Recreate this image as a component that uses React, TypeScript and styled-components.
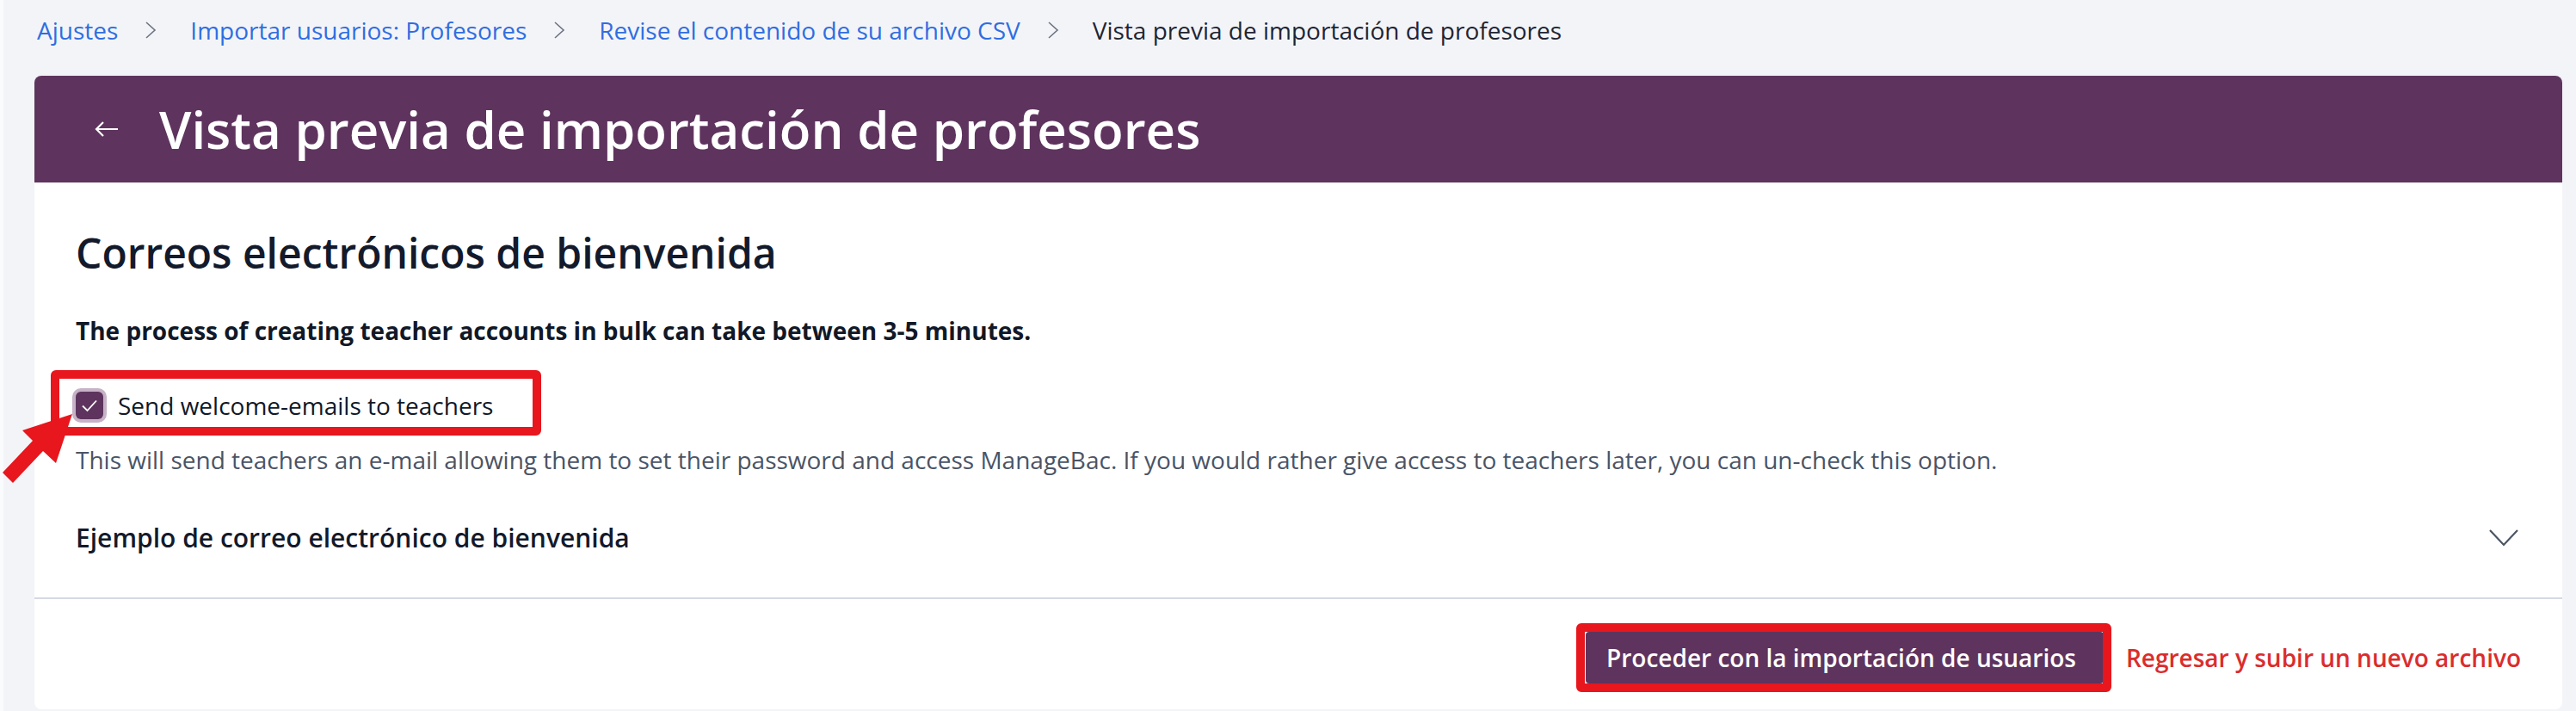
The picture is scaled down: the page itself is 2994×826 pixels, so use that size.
import React from "react";
import styled, { createGlobalStyle } from "styled-components";

const GlobalStyle = createGlobalStyle`
  html, body {
    margin: 0;
    padding: 0;
    background: #f3f4f8;
    font-family: "Open Sans", "Noto Sans", sans-serif;
  }
  * { box-sizing: border-box; }
`;

const Page = styled.div`
  min-height: 826px;
  padding: 0 16px 0 36px;
  border-left: 4px solid #fafbfc;
`;

const Breadcrumbs = styled.nav`
  display: flex;
  align-items: center;
  height: 88px;
  padding: 0 0 18px 3px;
  font-size: 28px;
  line-height: 38px;
`;

const Crumb = styled.a<{ $current?: boolean }>`
  color: ${(p) => (p.$current ? "#1f2533" : "#2f6ee0")};
  text-decoration: none;
`;

const Sep = styled.svg`
  width: 14px;
  height: 22px;
  margin: 0 39px 0 31px;
  flex: none;
`;

const Card = styled.section`
  background: #ffffff;
  border-radius: 8px;
`;

const CardHeader = styled.header`
  display: flex;
  align-items: center;
  height: 124px;
  padding-left: 70px;
  background: #5e345e;
  border-radius: 8px 8px 0 0;
`;

const BackArrow = styled.svg`
  width: 28px;
  height: 18px;
  margin-right: 47px;
  flex: none;
`;

const Title = styled.h1`
  margin: 0;
  color: #ffffff;
  font-size: 60px;
  line-height: 76px;
  font-weight: 600;
`;

const Body = styled.div`
  padding: 54px 48px 49px 48px;
`;

const Heading = styled.h2`
  margin: 0;
  font-size: 48px;
  line-height: 56px;
  font-weight: 600;
  color: #131a2b;
`;

const Notice = styled.p`
  margin: 42px 0 0;
  font-size: 28px;
  line-height: 40px;
  font-weight: 700;
  color: #111827;
`;

const CheckRow = styled.label`
  position: relative;
  display: inline-flex;
  align-items: center;
  height: 40px;
  margin-top: 47px;
  gap: 17px;
  font-size: 28px;
  line-height: 40px;
  color: #111827;
`;

const Box = styled.span`
  display: flex;
  align-items: center;
  justify-content: center;
  width: 32px;
  height: 32px;
  border-radius: 6px;
  background: #5e345e;
  box-shadow: 0 0 0 4px #c7b3c7;
`;

const Highlight = styled.span<{ $t: number; $r: number; $b: number; $l: number }>`
  position: absolute;
  top: ${(p) => -p.$t}px;
  right: ${(p) => -p.$r}px;
  bottom: ${(p) => -p.$b}px;
  left: ${(p) => -p.$l}px;
  border: 10px solid #e8161d;
  border-radius: 6px;
  pointer-events: none;
`;

const Pointer = styled.svg`
  position: absolute;
  left: -88px;
  top: 24px;
  width: 90px;
  height: 90px;
  pointer-events: none;
`;

const Hint = styled.p`
  margin: 24px 0 0;
  font-size: 28px;
  line-height: 38px;
  color: #4a5466;
`;

const Accordion = styled.div`
  display: flex;
  align-items: center;
  justify-content: space-between;
  margin-top: 52px;
`;

const AccordionTitle = styled.span`
  font-size: 30px;
  line-height: 40px;
  font-weight: 600;
  color: #131a2b;
`;

const Chevron = styled.svg`
  width: 40px;
  height: 24px;
`;

const Footer = styled.footer`
  display: flex;
  justify-content: flex-end;
  align-items: center;
  gap: 26px;
  padding: 38px 48px 30px;
  border-top: 2px solid #d5d9e0;
`;

const ButtonWrap = styled.span`
  position: relative;
  display: inline-flex;
`;

const Primary = styled.button`
  height: 60px;
  padding: 0 32px 0 24px;
  border: none;
  border-radius: 4px;
  background: #5e345e;
  color: #ffffff;
  font-family: inherit;
  font-size: 28px;
  font-weight: 600;
`;

const DangerLink = styled.a`
  color: #da2d2d;
  font-size: 28px;
  font-weight: 600;
  text-decoration: none;
`;

const crumbs = [
  "Ajustes",
  "Importar usuarios: Profesores",
  "Revise el contenido de su archivo CSV",
];

export default function App() {
  return (
    <>
      <GlobalStyle />
      <Page>
        <Breadcrumbs>
          {crumbs.map((c) => (
            <React.Fragment key={c}>
              <Crumb href="#">{c}</Crumb>
              <Sep viewBox="0 0 14 22">
                <path d="M2 2l10 9-10 9" fill="none" stroke="#6b7280" strokeWidth="1.6" />
              </Sep>
            </React.Fragment>
          ))}
          <Crumb $current>Vista previa de importación de profesores</Crumb>
        </Breadcrumbs>

        <Card>
          <CardHeader>
            <BackArrow viewBox="0 0 28 18">
              <path d="M27 9H2M10 1L2 9l8 8" fill="none" stroke="#ffffff" strokeWidth="2.2" />
            </BackArrow>
            <Title>Vista previa de importación de profesores</Title>
          </CardHeader>

          <Body>
            <Heading>Correos electrónicos de bienvenida</Heading>
            <Notice>
              The process of creating teacher accounts in bulk can take between 3-5 minutes.
            </Notice>
            <CheckRow>
              <Box>
                <svg width="20" height="16" viewBox="0 0 20 16">
                  <path d="M2 8.5l5.5 5.5L18 2.5" fill="none" stroke="#ffffff" strokeWidth="1.8" />
                </svg>
              </Box>
              Send welcome-emails to teachers
              <Highlight $t={21} $r={56} $b={15} $l={29} />
              <Pointer viewBox="0 0 90 90">
                <polygon points="84,6 26,25 38,37 3,74 15,86 50,49 65,63" fill="#e8161d" />
              </Pointer>
            </CheckRow>
            <Hint>
              This will send teachers an e-mail allowing them to set their password and access
              ManageBac. If you would rather give access to teachers later, you can un-check this
              option.
            </Hint>
            <Accordion>
              <AccordionTitle>Ejemplo de correo electrónico de bienvenida</AccordionTitle>
              <Chevron viewBox="0 0 40 24">
                <path d="M4 3l16 17L36 3" fill="none" stroke="#4b5563" strokeWidth="2.2" />
              </Chevron>
            </Accordion>
          </Body>

          <Footer>
            <ButtonWrap>
              <Primary>Proceder con la importación de usuarios</Primary>
              <Highlight $t={10} $r={9} $b={10} $l={11} />
            </ButtonWrap>
            <DangerLink href="#">Regresar y subir un nuevo archivo</DangerLink>
          </Footer>
        </Card>
      </Page>
    </>
  );
}
